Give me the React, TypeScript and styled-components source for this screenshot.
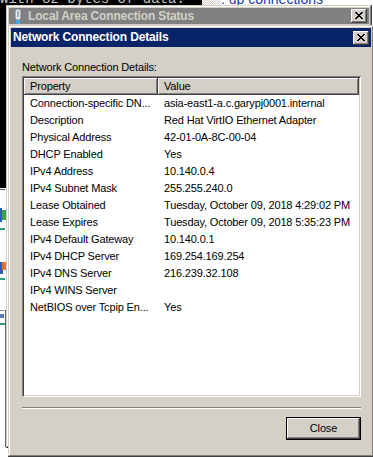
import React from "react";
import styled, { createGlobalStyle } from "styled-components";

const Global = createGlobalStyle`
  html, body { margin: 0; padding: 0; background: #ffffff; }
  body { font-family: "Liberation Sans", Arial, sans-serif; }
`;

const Desktop = styled.div`
  position: relative;
  width: 373px;
  height: 457px;
  overflow: hidden;
  background: #ffffff;
`;

const Console = styled.div`
  position: absolute;
  left: 0;
  top: 0;
  width: 202px;
  height: 188px;
  background: #000000;
  overflow: hidden;
`;

const ConsoleLine = styled.div`
  margin-top: -8px;
  font-family: "Liberation Mono", "Courier New", monospace;
  font-size: 14px;
  line-height: 14px;
  color: #c0c0c0;
  white-space: pre;
`;

const ScrollTrack = styled.div`
  position: absolute;
  left: 202px;
  top: 0;
  width: 18px;
  height: 6px;
  background: repeating-conic-gradient(#d4d0c8 0 25%, #ffffff 0 50%) 0 0 / 2px 2px;
`;

const ExplorerLink = styled.div`
  position: absolute;
  left: 221px;
  top: 0;
  height: 6px;
  overflow: hidden;
`;

const ExplorerText = styled.div`
  margin-top: -8px;
  font-family: "Liberation Sans", Arial, sans-serif;
  font-size: 14px;
  line-height: 14px;
  color: #1e3c9a;
  white-space: pre;
`;

const IconStrip = styled.svg`
  position: absolute;
  left: 0;
  top: 188px;
`;

const Win = styled.div<{ $left: number; $top: number; $width: number; $height: number }>`
  position: absolute;
  left: ${(p) => p.$left}px;
  top: ${(p) => p.$top}px;
  width: ${(p) => p.$width}px;
  height: ${(p) => p.$height}px;
  box-sizing: border-box;
  padding: 3px;
  background: #d4d0c8;
  box-shadow: inset -1px -1px #404040, inset 1px 1px #d4d0c8, inset -2px -2px #808080,
    inset 2px 2px #ffffff;
  display: flex;
  flex-direction: column;
`;

const TitleBar = styled.div<{ $active?: boolean; $h: number }>`
  height: ${(p) => p.$h}px;
  flex: 0 0 auto;
  display: flex;
  align-items: center;
  padding: 0 2px;
  box-sizing: border-box;
  background: ${(p) => (p.$active ? "#0a246a" : "#808080")};
  color: ${(p) => (p.$active ? "#ffffff" : "#d4d0c8")};
`;

const TitleIcon = styled.svg`
  flex: 0 0 16px;
  margin-right: 1px;
`;

const TitleText = styled.div<{ $h: number }>`
  flex: 1;
  font-family: "Liberation Sans", Arial, sans-serif;
  font-weight: bold;
  font-size: 12px;
  letter-spacing: -0.15px;
  line-height: ${(p) => p.$h}px;
  white-space: nowrap;
  overflow: hidden;
`;

const CaptionButton = styled.div`
  flex: 0 0 16px;
  width: 16px;
  height: 14px;
  box-sizing: border-box;
  padding: 3px 0 0 4px;
  background: #d4d0c8;
  box-shadow: inset -1px -1px #404040, inset 1px 1px #ffffff, inset -2px -2px #808080;
  display: flex;
  align-items: flex-start;
  justify-content: flex-start;
`;

const DialogBody = styled.div`
  flex: 1;
  display: flex;
  flex-direction: column;
  padding: 14px 10px 0 11px;
  font-family: "Liberation Sans", Arial, sans-serif;
  font-size: 11px;
  letter-spacing: -0.15px;
  color: #000000;
`;

const Label = styled.div`
  height: 13px;
  line-height: 13px;
  white-space: nowrap;
`;

const ListView = styled.div`
  margin-top: 2px;
  height: 321px;
  box-sizing: border-box;
  padding: 2px;
  background: #ffffff;
  box-shadow: inset 1px 1px #808080, inset -1px -1px #ffffff, inset 2px 2px #404040,
    inset -2px -2px #d4d0c8;
  overflow: hidden;
`;

const Row = styled.div`
  display: grid;
  grid-template-columns: 134px 1fr;
  height: 17px;
`;

const HeaderCell = styled.div`
  height: 17px;
  line-height: 17px;
  padding-left: 6px;
  background: #d4d0c8;
  box-shadow: inset -1px -1px #404040, inset 1px 1px #ffffff, inset -2px -2px #808080;
  white-space: nowrap;
  overflow: hidden;
`;

const Cell = styled.div`
  line-height: 17px;
  padding-left: 6px;
  white-space: nowrap;
  overflow: hidden;
`;

const Separator = styled.div`
  margin-top: 10px;
  height: 2px;
  box-sizing: border-box;
  border-top: 1px solid #808080;
  border-bottom: 1px solid #ffffff;
`;

const ButtonRow = styled.div`
  display: flex;
  justify-content: flex-end;
  margin-top: 8px;
`;

const PushButton = styled.div`
  width: 75px;
  height: 23px;
  box-sizing: border-box;
  border: 1px solid #000000;
  background: #d4d0c8;
  box-shadow: inset -1px -1px #404040, inset 1px 1px #ffffff, inset -2px -2px #808080;
  display: flex;
  align-items: center;
  justify-content: center;
  line-height: 21px;
`;

const CloseGlyph = () => (
  <svg width="8" height="7" viewBox="0 0 8 7" shapeRendering="crispEdges">
    <g fill="#000">
      <rect x="0" y="0" width="2" height="1" />
      <rect x="6" y="0" width="2" height="1" />
      <rect x="1" y="1" width="2" height="1" />
      <rect x="5" y="1" width="2" height="1" />
      <rect x="2" y="2" width="4" height="1" />
      <rect x="3" y="3" width="2" height="1" />
      <rect x="2" y="4" width="4" height="1" />
      <rect x="1" y="5" width="2" height="1" />
      <rect x="5" y="5" width="2" height="1" />
      <rect x="0" y="6" width="2" height="1" />
      <rect x="6" y="6" width="2" height="1" />
    </g>
  </svg>
);

const rows: [string, string][] = [
  ["Connection-specific DN...", "asia-east1-a.c.garypj0001.internal"],
  ["Description", "Red Hat VirtIO Ethernet Adapter"],
  ["Physical Address", "42-01-0A-8C-00-04"],
  ["DHCP Enabled", "Yes"],
  ["IPv4 Address", "10.140.0.4"],
  ["IPv4 Subnet Mask", "255.255.240.0"],
  ["Lease Obtained", "Tuesday, October 09, 2018 4:29:02 PM"],
  ["Lease Expires", "Tuesday, October 09, 2018 5:35:23 PM"],
  ["IPv4 Default Gateway", "10.140.0.1"],
  ["IPv4 DHCP Server", "169.254.169.254"],
  ["IPv4 DNS Server", "216.239.32.108"],
  ["IPv4 WINS Server", ""],
  ["NetBIOS over Tcpip En...", "Yes"],
];

export default function App() {
  return (
    <>
      <Global />
      <Desktop>
        <Console>
          <ConsoleLine>with 32 bytes of data:</ConsoleLine>
        </Console>
        <ScrollTrack />
        <ExplorerLink>
          <ExplorerText>: up connections</ExplorerText>
        </ExplorerLink>
        <IconStrip width="8" height="269" viewBox="0 0 8 269" shapeRendering="crispEdges">
          <rect x="0" y="1" width="5" height="1" fill="#555" />
          <rect x="0" y="20" width="2" height="14" fill="#2c5fb8" />
          <rect x="2" y="22" width="4" height="10" fill="#3aa53a" />
          <rect x="0" y="40" width="5" height="2" fill="#2aa07a" />
          <rect x="0" y="74" width="3" height="12" fill="#2c5fb8" />
          <rect x="2" y="74" width="4" height="8" fill="#e8702a" />
          <rect x="0" y="90" width="5" height="2" fill="#2aa07a" />
          <rect x="0" y="122" width="6" height="1" fill="#9a9a9a" />
          <rect x="0" y="126" width="4" height="4" fill="#5a7ab8" />
          <rect x="0" y="135" width="5" height="2" fill="#2aa07a" />
          <rect x="5" y="122" width="1" height="137" fill="#6a6a6a" />
          <rect x="5" y="258" width="3" height="1" fill="#404040" />
        </IconStrip>

        <Win $left={6} $top={5} $width={366} $height={443}>
          <TitleBar $h={16}>
            <TitleIcon width="16" height="16" viewBox="0 0 16 16">
              <rect x="4" y="1" width="6" height="11" rx="2" fill="#e8e8e8" stroke="#6a7a8a" strokeWidth="1" />
              <rect x="6" y="3" width="2" height="6" fill="#9ab0c8" />
              <rect x="5" y="12" width="4" height="4" fill="#4aa8e0" />
            </TitleIcon>
            <TitleText $h={16}>Local Area Connection Status</TitleText>
            <CaptionButton>
              <CloseGlyph />
            </CaptionButton>
          </TitleBar>
        </Win>

        <Win $left={8} $top={25} $width={366} $height={432}>
          <TitleBar $active $h={19}>
            <TitleText $h={19}>Network Connection Details</TitleText>
            <CaptionButton>
              <CloseGlyph />
            </CaptionButton>
          </TitleBar>
          <DialogBody>
            <Label>Network Connection Details:</Label>
            <ListView>
              <Row>
                <HeaderCell>Property</HeaderCell>
                <HeaderCell>Value</HeaderCell>
              </Row>
              {rows.map(([k, v]) => (
                <Row key={k}>
                  <Cell>{k}</Cell>
                  <Cell>{v}</Cell>
                </Row>
              ))}
            </ListView>
            <Separator />
            <ButtonRow>
              <PushButton>Close</PushButton>
            </ButtonRow>
          </DialogBody>
        </Win>
      </Desktop>
    </>
  );
}
